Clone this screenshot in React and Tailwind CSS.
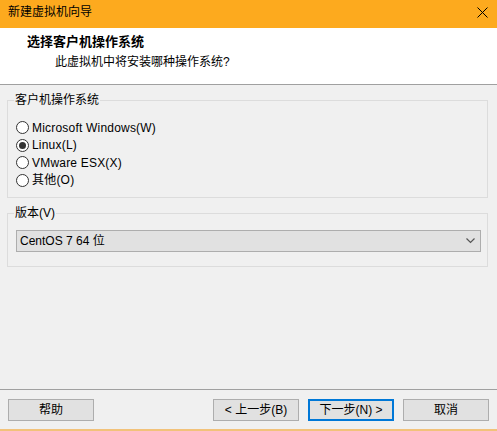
import React, { useState } from 'react';

// 新建虚拟机向导 — guest OS step of the VMware new-VM wizard (Win10 dialog look).

const FONT = { fontFamily: '"Liberation Sans", "Noto Sans CJK SC", sans-serif' };

const OS_OPTIONS = [
  { id: 'win', label: 'Microsoft Windows(W)' },
  { id: 'linux', label: 'Linux(L)' },
  { id: 'esx', label: 'VMware ESX(X)' },
  { id: 'other', label: '其他(O)' },
];

function Radio({ checked, label, onSelect }) {
  return (
    <label className="flex h-[17.5px] items-center cursor-default" onClick={onSelect}>
      <span className="flex h-[13px] w-[13px] items-center justify-center rounded-full border border-[#333] bg-white">
        {checked && <span className="h-[7px] w-[7px] rounded-full bg-[#333]" />}
      </span>
      <span className="ml-[3px] text-[12px] leading-4 tracking-[0.2px] text-black">{label}</span>
    </label>
  );
}

function Button({ children, primary = false }) {
  return (
    <button
      type="button"
      className={
        'flex h-[22px] w-[86px] items-center justify-center bg-[#e1e1e1] text-[12px] leading-4 text-black ' +
        (primary ? 'border-2 border-[#0078d7]' : 'border border-[#adadad]')
      }
    >
      {children}
    </button>
  );
}

export default function App() {
  const [os, setOs] = useState('linux');

  return (
    <div className="flex h-[431px] w-[497px] flex-col overflow-hidden bg-[#f0f0f0]" style={FONT}>
      {/* title bar */}
      <div className="flex h-[28px] shrink-0 items-start justify-between bg-[#fdaa1e] pl-[8px] pr-[9px] pt-[4px]">
        <span className="text-[12px] leading-4 text-black">新建虚拟机向导</span>
        <svg width="11" height="11" viewBox="0 0 11 11" className="mt-[3px]">
          <path d="M0.5 0.5 L10.5 10.5 M10.5 0.5 L0.5 10.5" stroke="#000" strokeWidth="1" />
        </svg>
      </div>

      {/* header */}
      <div className="h-[57px] shrink-0 border-b border-[#a0a0a0] bg-white pt-[6px]">
        <div className="pl-[27px] text-[13px] font-bold leading-4 text-black">选择客户机操作系统</div>
        <div className="mt-[4px] pl-[55px] text-[12px] leading-4 text-black">此虚拟机中将安装哪种操作系统?</div>
      </div>

      {/* body */}
      <div className="flex flex-1 flex-col px-[7px] pt-[7px] pr-[9px]">
        <fieldset className="border border-[#dcdcdc] pb-[8px] pl-[8px] pt-[11px]">
          <legend className="ml-[-2px] px-[1px] text-[12px] leading-4 text-black">客户机操作系统</legend>
          {OS_OPTIONS.map((o) => (
            <Radio key={o.id} label={o.label} checked={os === o.id} onSelect={() => setOs(o.id)} />
          ))}
        </fieldset>

        <fieldset className="mt-[7px] border border-[#dcdcdc] pb-[14px] pl-[8px] pr-[6px] pt-[9px]">
          <legend className="ml-[-2px] px-[1px] text-[12px] leading-4 text-black">版本(V)</legend>
          <div className="flex h-[22px] items-center justify-between border border-[#adadad] bg-[#e1e1e1] pl-[3px] pr-[5px]">
            <span className="text-[12px] leading-4 text-black">CentOS 7 64 位</span>
            <svg width="9" height="6" viewBox="0 0 9 6">
              <path d="M0.5 0.5 L4.5 4.5 L8.5 0.5" fill="none" stroke="#555" strokeWidth="1.2" />
            </svg>
          </div>
        </fieldset>
      </div>

      {/* footer */}
      <div className="flex h-[40px] shrink-0 items-start justify-between border-t border-[#a0a0a0] px-[8px] pt-[9px]">
        <Button>帮助</Button>
        <div className="flex gap-[9px]">
          <Button>&lt; 上一步(B)</Button>
          <Button primary>下一步(N) &gt;</Button>
          <Button>取消</Button>
        </div>
      </div>
      <div className="h-[2px] shrink-0 bg-[#f2c27a]" />
    </div>
  );
}
